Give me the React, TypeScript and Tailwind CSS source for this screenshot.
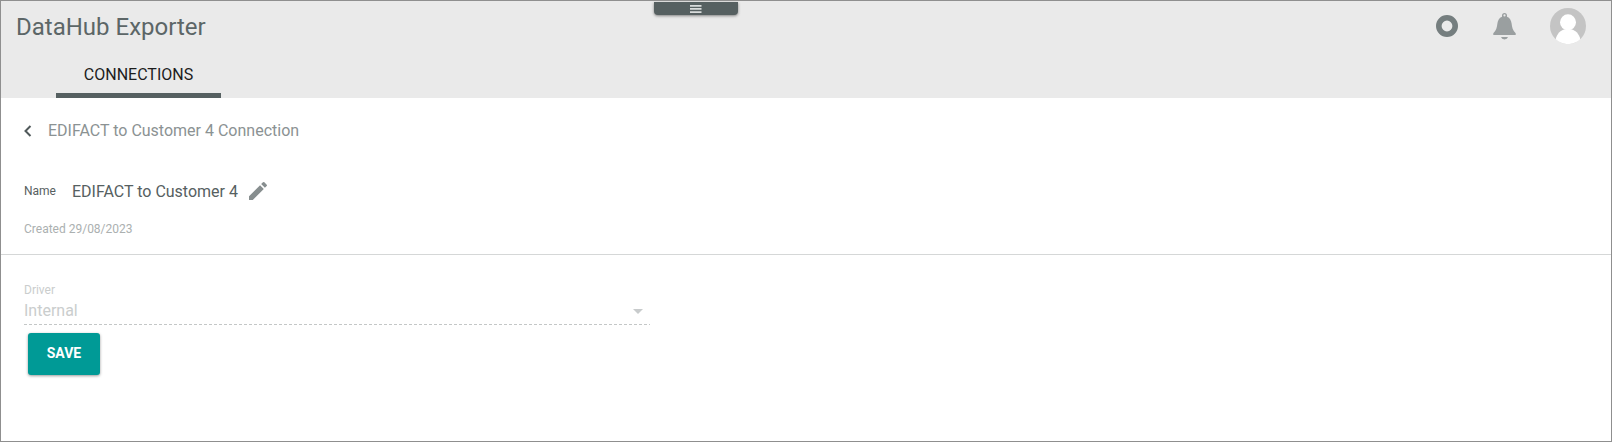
const DriverField = () => (
  <div className="mt-6 ml-[23px] w-[626px]">
    <div className="h-[21px] pt-px text-[12px] leading-5 text-[#cacdcd]">Driver</div>
    <div className="flex h-[22px] items-center justify-between">
      <span className="text-[16px] leading-[22px] text-[#cacdcd]">Internal</span>
      <svg viewBox="0 0 24 24" className="h-6 w-6" fill="#c8cbcc">
        <path d="M7 10l5 5 5-5z" />
      </svg>
    </div>
    <div className="mt-0.5 h-px bg-[repeating-linear-gradient(to_right,#c4c7c7_0px,#c4c7c7_3px,transparent_3px,transparent_5px)]" />
  </div>
);

const Header = () => (
  <header className="flex h-[97px] bg-[#eaeaea]">
    <div className="flex w-[653px] flex-col">
      <h1 className="mt-3 ml-[15px] text-[24px] leading-7 text-[#5c6667]">DataHub Exporter</h1>
      <nav className="mt-auto ml-[55px] flex">
        <div className="h-[35px] w-[165px] border-b-[5px] border-[#566061] text-center text-[16px] leading-6 text-[#1c1c1c]">
          CONNECTIONS
        </div>
      </nav>
    </div>
    <div className="mt-px flex h-[13px] w-[84px] items-center justify-center rounded-b-[4px] bg-[#566061] shadow-[0_1px_3px_rgba(0,0,0,0.45)]">
      <svg viewBox="0 0 12 8" className="h-2 w-3" fill="#d9dcdc">
        <path d="M0 0h11.500v1.700H0zM0 3.100h11.500v1.700H0zM0 6.200h11.500v1.700H0z" />
      </svg>
    </div>
    <div className="flex flex-1 justify-end pt-[7px] pr-[25px]">
      <div className="flex h-9 items-center">
        <svg viewBox="0 0 22 22" className="h-[22px] w-[22px]">
          <circle cx="11" cy="11" r="8.2" fill="none" stroke="#757e7f" strokeWidth="5.6" />
        </svg>
        <svg viewBox="0 0 23 27" className="mt-[1px] ml-[35px] h-[27px] w-[23px]" fill="#9a9fa0">
          <path
            fillRule="evenodd"
            d="M11.5 0a2.500 2.500 0 0 0-2.500 2.500v1.200C6 4.800 4.800 7.500 4.400 10.500C3.900 14.500 3.400 17.500.3 20.200V22h22.400v-1.800C19.600 17.500 19.100 14.500 18.600 10.500C18.200 7.500 17 4.800 14 3.700V2.500A2.500 2.500 0 0 0 11.500 0zm0 1.300a1.100 1.100 0 0 1 0 2.200a1.100 1.100 0 0 1 0-2.200z"
          />
          <path d="M8 24h7a3.600 3.200 0 0 1-7 0z" />
        </svg>
        <svg viewBox="0 0 36 36" className="ml-[34px] h-9 w-9">
          <circle cx="18" cy="18" r="18" fill="#c4c4c4" />
          <circle cx="18" cy="14.300" r="8" fill="#fff" />
          <path d="M5.700 31.200C7 25.500 10.500 22.500 14 21.500h8c3.500 1 7 4 8.300 9.700A18 18 0 0 1 5.700 31.200z" fill="#fff" />
        </svg>
      </div>
    </div>
  </header>
);

export default function App() {
  return (
    <div className="h-[442px] w-full overflow-hidden border border-[#8f8f8f] bg-white font-[Roboto,sans-serif]">
      <Header />
      <main>
        <div className="mt-[21px] flex h-6 items-center">
          <svg viewBox="0 0 8 12" className="ml-[23px] h-3 w-2" fill="none" stroke="#50595a" strokeWidth="2">
            <path d="M6.500 1L1.500 6l5 5" />
          </svg>
          <span className="ml-4 text-[16px] leading-6 text-[#8b9293]">EDIFACT to Customer 4 Connection</span>
        </div>
        <div className="mt-9 flex h-6 items-center pl-[23px]">
          <span className="w-12 text-[12px] leading-6 text-[#566061]">Name</span>
          <span className="pt-0.5 text-[16px] leading-6 text-[#566061]">EDIFACT to Customer 4</span>
          <svg viewBox="0 0 24 24" className="ml-2 h-6 w-6" fill="#878e8f">
            <path d="M3 17.250V21h3.750L17.810 9.940l-3.750-3.750L3 17.250zM20.710 7.040a1 1 0 0 0 0-1.410l-2.340-2.340a1 1 0 0 0-1.410 0l-1.830 1.830 3.750 3.750 1.830-1.830z" />
          </svg>
        </div>
        <p className="mt-4 h-5 pl-[23px] text-[12px] leading-5 text-[#abb0b0]">Created 29/08/2023</p>
        <hr className="mt-[15px] border-t border-[#d5d7d7]" />
        <DriverField />
        <button className="mt-2 ml-[27px] block h-[42px] w-[72px] rounded-[3px] bg-[#009a96] text-[14px] leading-[40px] font-bold text-white shadow-[0_1px_3px_rgba(0,0,0,0.4)]">
          <span className="block h-[42px]">SAVE</span>
        </button>
      </main>
    </div>
  );
}
